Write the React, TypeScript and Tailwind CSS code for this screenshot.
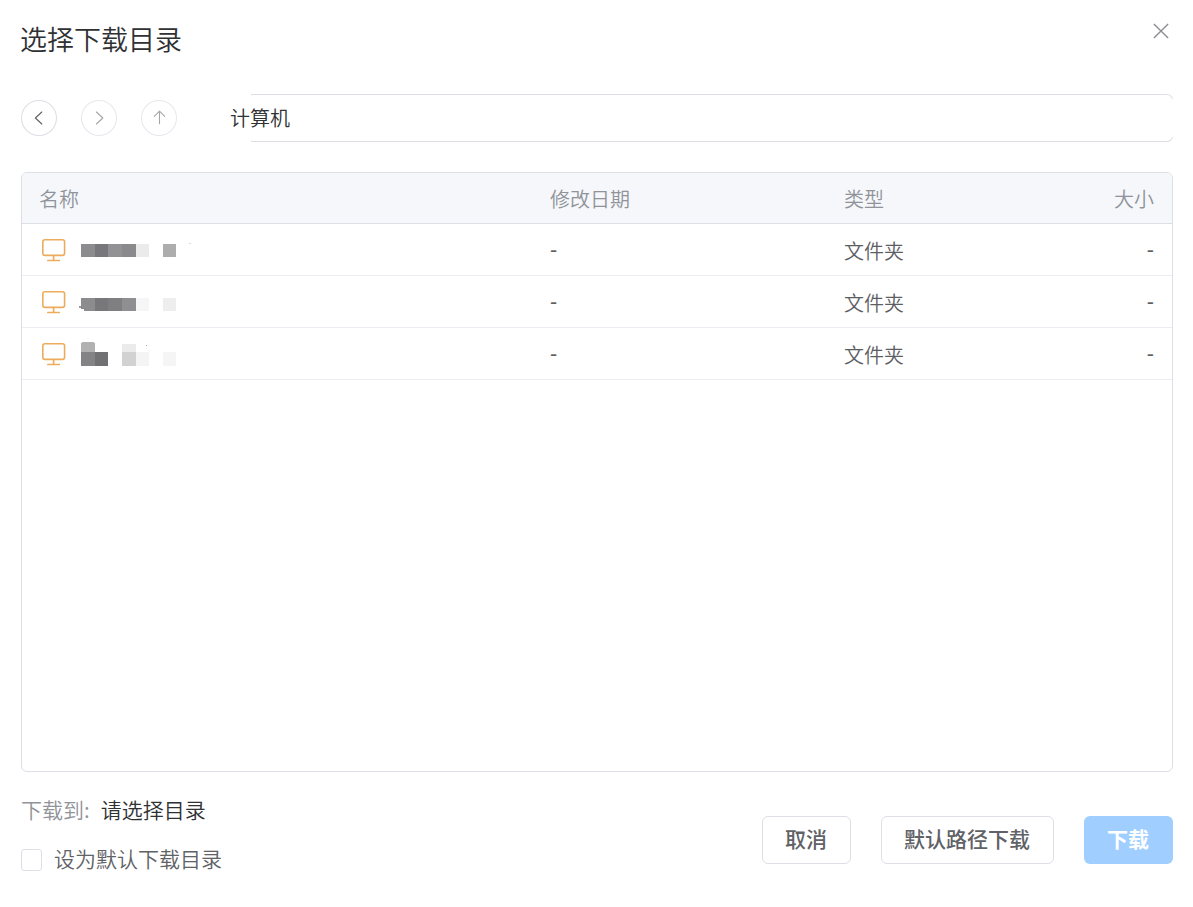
import React, { useState } from 'react';
import { clsx } from 'clsx';

interface MosaicBlock {
  left: number;
  top: number;
  width: number;
  height: number;
  color: string;
}

interface DriveRow {
  id: number;
  date: string;
  type: string;
  size: string;
  mosaic: MosaicBlock[];
}

// Mosaic offsets are relative to the top left corner of the name box
const rows: DriveRow[] = [
  {
    id: 1,
    date: '-',
    type: '文件夹',
    size: '-',
    mosaic: [
      { left: 0, top: 20, width: 14, height: 13, color: '#8c8c8f' },
      { left: 14, top: 20, width: 13, height: 13, color: '#78787c' },
      { left: 27, top: 20, width: 14, height: 13, color: '#929295' },
      { left: 41, top: 20, width: 14, height: 13, color: '#8a8a8d' },
      { left: 55, top: 20, width: 13, height: 13, color: '#ebebeb' },
      { left: 82, top: 20, width: 13, height: 13, color: '#adadae' },
      { left: 108, top: 19, width: 2, height: 1, color: '#d8d8d8' },
    ],
  },
  {
    id: 2,
    date: '-',
    type: '文件夹',
    size: '-',
    mosaic: [
      { left: -2, top: 30, width: 2, height: 2, color: '#9a9a9c' },
      { left: 0, top: 22, width: 14, height: 11, color: '#8c8c8f' },
      { left: 3, top: 33, width: 11, height: 2, color: '#8c8c8f' },
      { left: 14, top: 22, width: 13, height: 13, color: '#78787c' },
      { left: 27, top: 22, width: 14, height: 13, color: '#7f7f82' },
      { left: 41, top: 22, width: 14, height: 13, color: '#8f8f92' },
      { left: 55, top: 22, width: 13, height: 13, color: '#f6f6f7' },
      { left: 82, top: 22, width: 13, height: 13, color: '#eeeeee' },
    ],
  },
  {
    id: 3,
    date: '-',
    type: '文件夹',
    size: '-',
    mosaic: [
      { left: 0, top: 15, width: 14, height: 9, color: '#b1b1b2' },
      { left: 1, top: 14, width: 12, height: 1, color: '#b1b1b2' },
      { left: 0, top: 24, width: 14, height: 14, color: '#838386' },
      { left: 14, top: 24, width: 13, height: 14, color: '#717174' },
      { left: 41, top: 16, width: 14, height: 8, color: '#ebebeb' },
      { left: 41, top: 24, width: 14, height: 14, color: '#d2d2d2' },
      { left: 55, top: 24, width: 13, height: 14, color: '#f4f4f4' },
      { left: 65, top: 17, width: 1, height: 1, color: '#a8a8a8' },
      { left: 82, top: 24, width: 13, height: 14, color: '#f5f5f5' },
    ],
  },
];

const navButtons = [
  { label: '后退', path: 'M20.8 12L14.4 18l6.4 6', active: true },
  { label: '前进', path: 'M15.4 12l6.4 6-6.4 6', active: false },
  { label: '上一级', path: 'M18.5 23.7V11.2M13.3 16.3l5.2-5.2 5.2 5.2', active: false },
];

function MonitorIcon() {
  return (
    <svg className="h-6 w-6 shrink-0" viewBox="0 0 24 24" fill="none" stroke="#ecac5b" strokeWidth="1.6" strokeLinecap="round">
      <rect x="0.8" y="1.8" width="21.8" height="15.6" rx="2.2" />
      <path d="M11.6 17.5v4.9M5.8 22.5h11.6" />
    </svg>
  );
}

function NavButtons() {
  return (
    <div className="flex gap-6">
      {navButtons.map(({ label, path, active }) => (
        <button
          key={label}
          aria-label={label}
          className={clsx(
            'h-9 w-9 rounded-full shadow-[inset_0_0_0_1px]',
            active ? 'text-[#5f6165] shadow-[#dcdee4]' : 'text-[#a4a6aa] shadow-[#e6e8ed]'
          )}
        >
          <svg className="h-9 w-9" viewBox="0 0 36 36" fill="none" stroke="currentColor" strokeWidth="1.1" strokeLinecap="round" strokeLinejoin="round">
            <path d={path} />
          </svg>
        </button>
      ))}
    </div>
  );
}

function FileTable() {
  return (
    <div className="mt-[30px] h-[600px] overflow-hidden rounded-md border border-[#dcdfe6] text-[20px]">
      <div className="grid h-[51px] grid-cols-[528px_294px_1fr_100px] items-center border-b border-[#dcdfe6] bg-[#f5f7fb] pr-[18px] pt-px leading-[30px] text-[#909399]">
        <span className="pl-[17px]">名称</span>
        <span>修改日期</span>
        <span>类型</span>
        <span className="text-right">大小</span>
      </div>
      {rows.map((row) => (
        <div
          key={row.id}
          className="grid h-[52px] grid-cols-[528px_294px_1fr_100px] items-center border-b border-[#ebedf2] pr-[18px] leading-[30px] text-[#5c5e63]"
        >
          <div className="flex h-full items-center gap-[15px] pl-5">
            <MonitorIcon />
            <div className="relative h-full w-28">
              {row.mosaic.map((block, i) => (
                <span
                  key={i}
                  className="absolute"
                  style={{
                    left: block.left,
                    top: block.top,
                    width: block.width,
                    height: block.height,
                    backgroundColor: block.color,
                  }}
                />
              ))}
            </div>
          </div>
          <span className="pb-px font-medium">{row.date}</span>
          <span className="pt-0.5">{row.type}</span>
          <span className="pb-px text-right font-medium">{row.size}</span>
        </div>
      ))}
    </div>
  );
}

export default function App() {
  const [asDefault, setAsDefault] = useState(false);

  return (
    <div className="h-[907px] w-[1193px] bg-white pl-[21px] pr-5 font-['Noto_Sans_CJK_SC',sans-serif] font-[350] text-[#303133]">
      {/* Title */}
      <div className="flex h-[94px] items-start justify-between">
        <h1 className="-ml-px pt-[19px] text-[27px] font-[350] leading-10 text-[#303133]">选择下载目录</h1>
        <button aria-label="关闭" className="mr-1 mt-[23px]">
          <svg className="h-4 w-4" viewBox="0 0 16 16" fill="none" stroke="#8b8d91" strokeWidth="1.4">
            <path d="M0.9 0.9l14.2 14.2M15.1 0.9L0.9 15.1" />
          </svg>
        </button>
      </div>

      {/* Toolbar */}
      <div className="flex h-12 items-center">
        <NavButtons />
        <div className="ml-[53px] flex h-12 flex-1 items-center">
          <span className="z-10 -mr-[39px] w-[60px] whitespace-nowrap text-[20px] leading-[30px]">计算机</span>
          <div className="relative h-12 flex-1 rounded-r-md border border-l-0 border-[#dcdfe6]">
            <span className="absolute -right-px bottom-1 top-1 w-px bg-white" />
          </div>
        </div>
      </div>

      <FileTable />

      {/* Footer */}
      <div className="flex justify-between">
        <div className="pt-[22px] text-[21px] leading-[30px]">
          <div className="flex gap-[11px]">
            <span className="text-[#909399]">下载到:</span>
            <span>请选择目录</span>
          </div>
          <label className="mt-[19px] flex items-center text-[#606266]">
            <input
              type="checkbox"
              checked={asDefault}
              onChange={(e) => setAsDefault(e.target.checked)}
              className="mr-3 mt-1 h-[22px] w-[21px] appearance-none rounded-[3px] border border-[#dcdfe6] checked:bg-[#409eff]"
            />
            设为默认下载目录
          </label>
        </div>
        <div className="flex gap-[30px] pt-11 text-[21px] font-medium">
          <button className="h-12 w-[89px] rounded-md border border-[#dcdfe6] pb-0.5 pr-px text-[#606266]">取消</button>
          <button className="h-12 w-[173px] rounded-md border border-[#dcdfe6] pb-0.5 pr-px text-[#606266]">默认路径下载</button>
          <button className="h-12 w-[89px] rounded-md bg-[#a0cfff] pb-0.5 pr-px font-bold text-white">下载</button>
        </div>
      </div>
    </div>
  );
}
